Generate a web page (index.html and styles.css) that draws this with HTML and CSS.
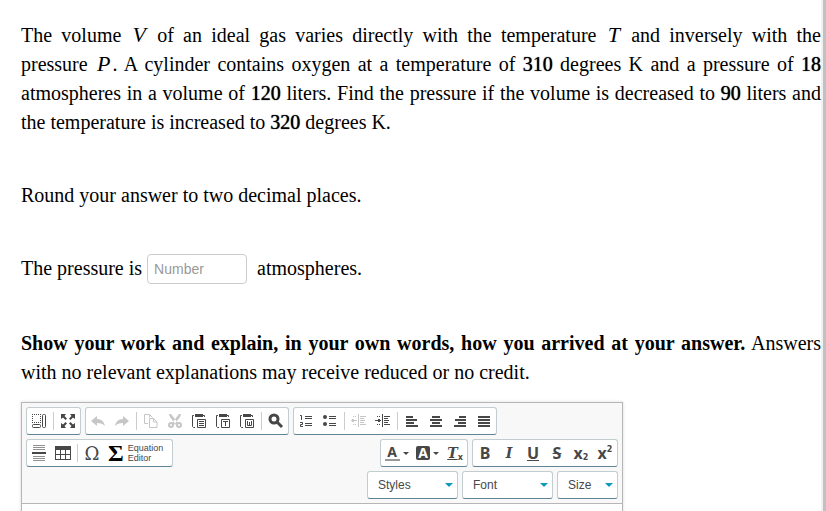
FILE: index.html
```html
<!DOCTYPE html>
<html lang="en">
<head>
    <meta charset="UTF-8">
    <meta name="viewport" content="width=device-width, initial-scale=1.0">
    <title>Ideal Gas Question</title>
    <link rel="stylesheet" href="styles.css">
</head>
<body>
    <main class="question">
        <p>The volume <i class="var">V</i> of an ideal gas varies directly with the temperature <i class="var">T</i> and inversely with the pressure <i class="var">P</i>. A cylinder contains oxygen at a temperature of <span class="num">310</span> degrees K and a pressure of <span class="num">18</span> atmospheres in a volume of <span class="num">120</span> liters. Find the pressure if the volume is decreased to <span class="num">90</span> liters and the temperature is increased to <span class="num">320</span> degrees K.</p>
        <p>Round your answer to two decimal places.</p>
        <div class="answer">
            <label for="pressure">The pressure is</label>
            <input id="pressure" type="text" placeholder="Number">
            <span class="unit">atmospheres.</span>
        </div>
        <p class="explain"><b>Show your work and explain, in your own words, how you arrived at your answer.</b> Answers with no relevant explanations may receive reduced or no credit.</p>

        <div class="editor">
            <div class="toolbar">
                <div class="row">
                    <div class="group">
                        <button aria-label="Show blocks"><svg viewBox="0 0 16 16"><path d="M1 1h1v1H1zM3 1h1v1H3zM5 1h1v1H5zM7 1h1v1H7zM9 1h1v1H9zM1 3h1v1H1zM1 5h1v1H1zM1 7h1v1H1zM1 9h1v1H1zM9 3h1v1H9zM9 5h1v1H9zM9 7h1v1H9zM3 9h1v1H3zM5 9h1v1H5zM7 9h1v1H7zM9 9h1v1H9z"/><rect class="line" x="1.5" y="11.5" width="8" height="3" rx="1"/><rect class="line" x="11.5" y="1.5" width="3" height="13" rx="1"/></svg></button>
                        <span class="sep"></span>
                        <button aria-label="Maximize"><svg viewBox="0 0 16 16"><path d="M1 1h5L4.500 3l2.500 2.500L5.500 7 3 4.500 1 6zM15 1v5l-2-1.500L10.500 7 9 5.500 11.500 3 10 1zM1 15v-5l2 1.500L5.500 9 7 10.500 4.500 13 6 15zM15 15h-5l1.500-2L9 10.500 10.500 9l2.500 2.500 2-1.500z"/></svg></button>
                    </div>
                    <div class="group">
                        <button aria-label="Undo" disabled><svg viewBox="0 0 16 16"><path d="M1 8l6-5v3c5 0 7 3 8 7-2-2-4-3-8-3v3z"/></svg></button>
                        <button aria-label="Redo" disabled><svg viewBox="0 0 16 16"><path d="M15 8L9 3v3c-5 0-7 3-8 7 2-2 4-3 8-3v3z"/></svg></button>
                        <span class="sep"></span>
                        <button aria-label="Copy" disabled><svg viewBox="0 0 16 16"><path class="line" d="M5 10.500H1.500v-9h5l3 3M6.500 1.500v3M6.500 5.500h4l3.500 3.500v5.500h-7.500zM10.500 5.500V9H14"/></svg></button>
                        <button aria-label="Cut" disabled><svg viewBox="0 0 16 16"><path d="M2 1l2 0 7 9-2 2L3 4zM14 1h-2L5 10l2 2 6-8z"/><circle class="thick" cx="4" cy="12" r="2"/><circle class="thick" cx="12" cy="12" r="2"/></svg></button>
                        <button aria-label="Paste"><svg viewBox="0 0 16 16"><path d="M4 1h8v3H4z"/><path class="line" d="M3 2.500H1.500v11l1 1H4M12 2.500h1.500V4M6.500 6.500h8v8h-8z"/><path class="line" d="M8 8.500h5M8 10.500h5M8 12.500h5"/></svg></button>
                        <button aria-label="Paste as plain text"><svg viewBox="0 0 16 16"><path d="M4 1h8v3H4z"/><path class="line" d="M3 2.500H1.500v11l1 1H4M12 2.500h1.500V4M6.500 6.500h8v8h-8z"/><path class="line" d="M8 8.500h5M10.500 8v5"/></svg></button>
                        <button aria-label="Paste from Word"><svg viewBox="0 0 16 16"><path d="M4 1h8v3H4z"/><path class="line" d="M3 2.500H1.500v11l1 1H4M12 2.500h1.500V4M6.500 6.500h8v8h-8z"/><path class="line" d="M8.500 8v4.500h4V8M10.500 9v3"/></svg></button>
                        <span class="sep"></span>
                        <button aria-label="Find"><svg viewBox="0 0 16 16"><circle class="heavy" cx="6" cy="6" r="4"/><path class="heavy" d="M9 9l5 5"/></svg></button>
                    </div>
                    <div class="group">
                        <button aria-label="Numbered list"><svg viewBox="0 0 16 16"><path class="line" d="M2 2.500h1.500V7M2 9.500h2.500v2H2.500v2H5"/><path d="M7 3h7v1H7zM7 5h7v1H7zM7 10h7v1H7zM7 12h7v1H7z"/></svg></button>
                        <button aria-label="Bulleted list"><svg viewBox="0 0 16 16"><circle cx="3" cy="4" r="2"/><circle cx="3" cy="11" r="2"/><path d="M7 3h7v1H7zM7 5h7v1H7zM7 10h7v1H7zM7 12h7v1H7z"/></svg></button>
                        <span class="sep"></span>
                        <button aria-label="Decrease indent" disabled><svg viewBox="0 0 16 16"><path d="M0 7h6v1H0zM1 6h2v3H1zM7 1h1v13H7zM2 3h1v1H2zM4 3h1v1H4zM2 11h1v1H2zM4 11h1v1H4zM9 3h6v1H9zM9 5h4v1H9zM9 7h5v1H9zM9 9h4v1H9zM9 11h6v1H9z"/></svg></button>
                        <button aria-label="Increase indent"><svg viewBox="0 0 16 16"><path d="M0 7h6v1H0zM3 6h2v3H3zM7 1h1v13H7zM2 3h1v1H2zM4 3h1v1H4zM2 11h1v1H2zM4 11h1v1H4zM9 3h6v1H9zM9 5h4v1H9zM9 7h5v1H9zM9 9h4v1H9zM9 11h6v1H9z"/></svg></button>
                        <span class="sep"></span>
                        <button aria-label="Align left"><svg viewBox="0 0 16 16"><path d="M2 3h7v2H2zM2 6h11v2H2zM2 9h8v2H2zM2 12h12v2H2z"/></svg></button>
                        <button aria-label="Center"><svg viewBox="0 0 16 16"><path d="M4 3h8v2H4zM2 6h12v2H2zM4 9h8v2H4zM2 12h12v2H2z"/></svg></button>
                        <button aria-label="Align right"><svg viewBox="0 0 16 16"><path d="M7 3h7v2H7zM3 6h11v2H3zM6 9h8v2H6zM2 12h12v2H2z"/></svg></button>
                        <button aria-label="Justify"><svg viewBox="0 0 16 16"><path d="M2 3h12v2H2zM2 6h12v2H2zM2 9h12v2H2zM2 12h12v2H2z"/></svg></button>
                    </div>
                </div>
                <div class="row split">
                    <div class="group">
                        <button aria-label="Horizontal line"><svg viewBox="0 0 16 16"><path class="faint" d="M2 0h12v1H2zM2 2h12v1H2zM2 4h12v1H2zM2 11h12v1H2zM2 13h12v1H2zM2 15h12v1H2z"/><path d="M1 7h14v2H1z"/></svg></button>
                        <button aria-label="Table"><svg viewBox="0 0 16 16"><path d="M0 1h16v14H0zM1 5v4h4V5zM6 5v4h4V5zM11 5v4h4V5zM1 10v4h4v-4zM6 10v4h4v-4zM11 10v4h4v-4z" fill-rule="evenodd"/></svg></button>
                        <span class="sep"></span>
                        <button class="omega" aria-label="Special character">Ω</button>
                        <button class="equation"><span class="sigma">Σ</span><span>Equation<br>Editor</span></button>
                    </div>
                    <div class="row">
                        <div class="group">
                            <button class="color" aria-label="Text color"><span class="fore">A</span><span class="caret"></span></button>
                            <button class="color" aria-label="Background color"><span class="back">A</span><span class="caret"></span></button>
                            <button class="serif" aria-label="Remove format"><u>T</u><sub>x</sub></button>
                        </div>
                        <div class="group">
                            <button class="letter" aria-label="Bold">B</button>
                            <button class="serif" aria-label="Italic">I</button>
                            <button class="letter" aria-label="Underline"><u>U</u></button>
                            <button class="letter" aria-label="Strikethrough"><s>S</s></button>
                            <button class="letter" aria-label="Subscript">x<sub>2</sub></button>
                            <button class="letter" aria-label="Superscript">x<sup>2</sup></button>
                        </div>
                    </div>
                </div>
                <div class="row end">
                    <div class="group combo">
                        <select aria-label="Styles"><option>Styles</option></select>
                    </div>
                    <div class="group combo">
                        <select aria-label="Font"><option>Font</option></select>
                    </div>
                    <div class="group combo small">
                        <select aria-label="Size"><option>Size</option></select>
                    </div>
                </div>
            </div>
            <textarea class="content" aria-label="Explanation"></textarea>
        </div>
    </main>
</body>
</html>
```

FILE: styles.css
```css
* {
    box-sizing: border-box;
}

body {
    margin: 0;
    background-color: #fff;
    color: #000;
    font-family: "Liberation Serif", "Times New Roman", serif;
    font-size: 20px;
    line-height: 29px;
    border-right: 3px solid #c1c1c1;
}

.question {
    display: flex;
    flex-direction: column;
    height: 100vh;
    padding: 21px 0 0 21px;
    border-right: 2px solid #f1f1f1;
}

p {
    margin: 0 0 44px;
    text-align: justify;
}

.var {
    padding: 0 2px;
    font-size: 22px;
    line-height: 1;
}

.num {
    text-shadow: 0 0 1px #000;
}

.answer {
    display: flex;
    align-items: flex-start;
    margin-bottom: 45px;
}

.answer input {
    width: 100px;
    height: 30px;
    margin: 0 10px 0 5px;
    padding: 0 6px;
    border: 1px solid #ccc;
    border-radius: 4px;
    font: 14px "Liberation Sans", Arial, sans-serif;
}

.answer input::placeholder {
    color: #999;
}

.explain {
    margin-bottom: 15px;
}

.editor {
    display: flex;
    flex: 1;
    flex-direction: column;
    width: 100%;
    max-width: 602px;
    border: 1px solid #b6b6b6;
    border-bottom: none;
    box-shadow: 0 0 3px rgba(0, 0, 0, 0.15);
    font-family: "Liberation Sans", Arial, sans-serif;
}

.toolbar {
    display: flex;
    flex-direction: column;
    gap: 4px;
    padding: 4px;
    background-color: #f8f8f8;
    border-bottom: 1px solid #b6b6b6;
}

.row {
    display: flex;
    gap: 4px;
}

.split {
    justify-content: space-between;
}

.end {
    justify-content: flex-end;
}

.group {
    display: flex;
    align-items: center;
    height: 28px;
    background-color: #fff;
    border: 1px solid #c2cdd0;
    border-bottom-color: #5f8495;
    border-radius: 3px;
}

.group button {
    display: flex;
    align-items: center;
    justify-content: center;
    width: 24px;
    height: 26px;
    padding: 0;
    border: none;
    background: none;
    color: #474747;
}

.group button:disabled {
    color: #c6c6c6;
}

.group svg {
    width: 16px;
    height: 16px;
    fill: currentColor;
}

svg .line,
svg .thick,
svg .heavy {
    fill: none;
    stroke: currentColor;
}

svg .thick {
    stroke-width: 2;
}

svg .heavy {
    stroke-width: 3;
}

svg .faint {
    opacity: 0.6;
}

.sep {
    width: 1px;
    height: 18px;
    margin: 0 2px;
    background-color: #ccc;
}

.group .omega {
    font: 18px "DejaVu Serif", serif;
}

.group .equation {
    width: 68px;
    justify-content: flex-start;
    gap: 4px;
    padding-left: 4px;
    text-align: left;
    font: 9px/10px "Liberation Sans", Arial, sans-serif;
}

.sigma {
    font: bold 24px/24px "Liberation Serif", serif;
    color: #000;
}

.group .color {
    width: 31px;
    gap: 3px;
    font: bold 14px/14px "Noto Sans", sans-serif;
}

.fore {
    width: 15px;
    border-bottom: 2px solid #999;
}

.back {
    width: 14px;
    border-radius: 2px;
    background-color: #474747;
    color: #fff;
}

.caret {
    border: 3px solid transparent;
    border-top-color: #474747;
    border-bottom: none;
}

.group .letter {
    font: bold 16px "Noto Sans", sans-serif;
}

.group .serif {
    font: italic bold 14px "DejaVu Serif", serif;
}

.group sub,
.group sup {
    font: bold 8px "DejaVu Sans", sans-serif;
}

.group sub {
    align-self: flex-end;
    padding-bottom: 4px;
}

.group sup {
    align-self: flex-start;
    padding-top: 5px;
}

.combo {
    position: relative;
    width: 91px;
}

.small {
    width: 61px;
}

.combo::after {
    content: "";
    position: absolute;
    right: 4px;
    top: 11px;
    border: 4px solid transparent;
    border-top-color: #0d9bbd;
    border-bottom: none;
    pointer-events: none;
}

.combo select {
    appearance: none;
    width: 100%;
    height: 26px;
    padding: 0 10px;
    border: none;
    background: none;
    color: #474747;
    font: 12px "Liberation Sans", Arial, sans-serif;
}

.content {
    flex: 1;
    width: 100%;
    min-height: 0;
    padding: 0;
    border: none;
    resize: none;
}
```
